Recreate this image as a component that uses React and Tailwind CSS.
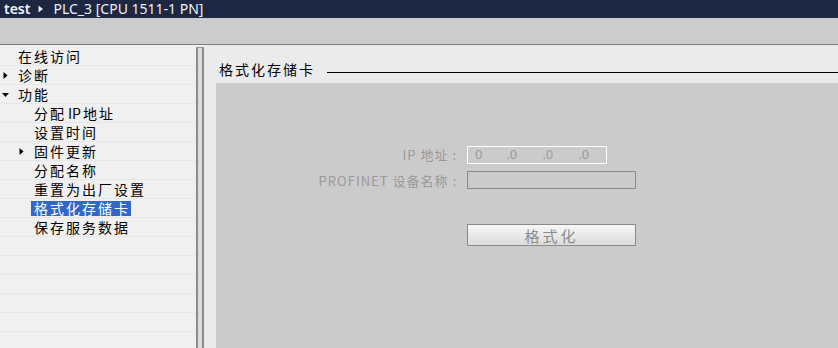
import React from 'react';

const cjk = { fontFamily: '"Noto Sans CJK SC", "Noto Sans", sans-serif' };

const rows = [
  { label: '在线访问', level: 0 },
  { label: '诊断', level: 0, arrow: 'right' },
  { label: '功能', level: 0, arrow: 'down' },
  {
    label: (
      <>
        分配<span className="tracking-[0px] px-[2px]">IP</span>地址
      </>
    ),
    level: 1,
  },
  { label: '设置时间', level: 1 },
  { label: '固件更新', level: 1, arrow: 'right' },
  { label: '分配名称', level: 1 },
  { label: '重置为出厂设置', level: 1 },
  { label: '格式化存储卡', level: 1, selected: true },
  { label: '保存服务数据', level: 1 },
  { label: '' },
  { label: '' },
  { label: '' },
  { label: '' },
  { label: '' },
  { label: '' },
];

const Arrow = ({ dir }) =>
  dir === 'down' ? (
    <svg width="9" height="9" viewBox="0 0 9 9" className="shrink-0">
      <path d="M1 3 L8 3 L4.5 7 Z" fill="#000" />
    </svg>
  ) : (
    <svg width="9" height="9" viewBox="0 0 9 9" className="shrink-0">
      <path d="M2.5 1 L6.5 4.5 L2.5 8 Z" fill="#000" />
    </svg>
  );

const TreeRow = ({ label, level, arrow, selected }) => (
  <div className="h-[19px] flex items-center border-b border-[#e7e7e7]">
    <div className={level === 1 ? 'w-[31px] flex items-center pl-[17px]' : 'w-[15px] flex items-center pl-[1px]'}>
      {arrow && <Arrow dir={arrow} />}
    </div>
    {label && (
      <span
        className={
          'text-[14px] leading-[15px] tracking-[2px] pl-[3px] pr-[1px] whitespace-nowrap ' +
          (selected ? 'bg-[#3168c8] text-white' : 'text-black')
        }
        style={cjk}
      >
        {label}
      </span>
    )}
  </div>
);

export default function App() {
  return (
    <div className="w-[838px] h-[348px] overflow-hidden flex flex-col bg-[#ebebeb]">
      {/* title bar */}
      <div className="h-[18px] bg-[#1d2741] flex items-center text-[#eef1f6] text-[14px] leading-none" style={{ fontFamily: '"Noto Sans", sans-serif' }}>
        <span className="pl-[4px] font-semibold">test</span>
        <svg width="6" height="8" viewBox="0 0 6 8" className="ml-[8px] mr-[9px]">
          <path d="M0.5 0.5 L5 4 L0.5 7.5 Z" fill="#e8ecf2" />
        </svg>
        <span>PLC_3 [CPU 1511-1 PN]</span>
      </div>
      {/* toolbar strip */}
      <div className="h-[27px] bg-[#cccccc] border-b border-[#7d7d7d] shrink-0" />

      <div className="flex-1 flex min-h-0">
        {/* tree */}
        <div className="w-[196px] bg-[#f0f0f0] pt-[2px]">
          {rows.map((r, i) => (
            <TreeRow key={i} {...r} />
          ))}
        </div>
        {/* scrollbar */}
        <div className="w-[8px] bg-[#f0f0f0] pt-[2px] flex">
          <div className="flex-1 bg-[#dcdcdc] border-x-[2px] border-[#8c8c8c] border-t border-t-[#9a9a9a]" />
        </div>

        {/* right panel */}
        <div className="flex-1 flex flex-col pl-[12px] bg-[#ebebeb]">
          <div className="h-[38px] flex items-center pl-[3px] pt-[10px]">
            <span className="text-[14px] tracking-[2px] text-black whitespace-nowrap" style={cjk}>
              格式化存储卡
            </span>
            <div className="flex-1 ml-[12px] mt-[6px] h-[1px] bg-black" />
          </div>
          <div className="flex-1 bg-[#cbcbcb] pt-[62px]">
            <div className="flex flex-col gap-[6px]">
              <div className="flex items-center">
                <div className="w-[251px] pr-[10px] text-right text-[13px] text-[#9a9a9a] tracking-[1px] whitespace-nowrap" style={cjk}>
                  IP 地址 :
                </div>
                <div className="h-[18px] w-[140px] border border-white flex items-center text-[13px] text-[#9a9a9a]" style={{ fontFamily: '"Noto Sans", sans-serif' }}>
                  <span className="pl-[7px] w-[35px]">0</span>
                  <span className="w-[36px]">&nbsp;.0</span>
                  <span className="w-[36px]">&nbsp;.0</span>
                  <span>&nbsp;.0</span>
                </div>
              </div>
              <div className="flex items-center">
                <div className="w-[251px] pr-[10px] text-right text-[13px] text-[#9a9a9a] tracking-[1px] whitespace-nowrap" style={cjk}>
                  PROFINET 设备名称 :
                </div>
                <div className="h-[18px] w-[169px] border border-[#8a8a8a]" />
              </div>
            </div>
            <div className="flex mt-[34px]">
              <div className="w-[251px]" />
              <button
                className="h-[22px] w-[169px] border border-[#8a8a8a] bg-gradient-to-b from-[#f7f7f7] to-[#dcdcdc] text-[15px] text-[#8c8c8c] tracking-[3px] flex items-center justify-center leading-none"
                style={cjk}
              >
                格式化
              </button>
            </div>
          </div>
        </div>
      </div>
    </div>
  );
}
